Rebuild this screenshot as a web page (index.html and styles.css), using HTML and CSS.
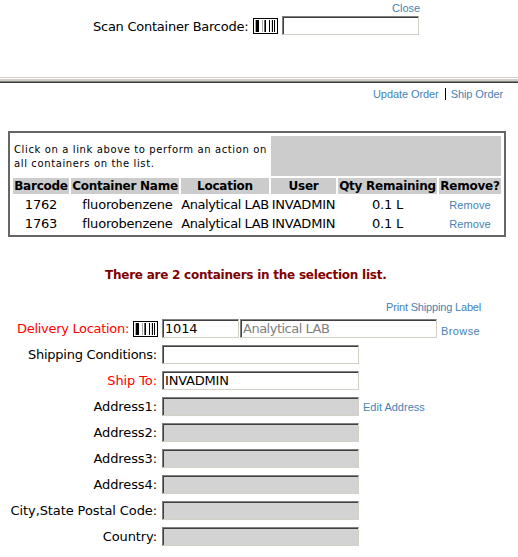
FILE: index.html
```
<!DOCTYPE html>
<html lang="en">
<head>
<meta charset="utf-8">
<title>Ship Order</title>
<link rel="stylesheet" href="styles.css">
</head>
<body>
<svg class="defs" width="0" height="0" aria-hidden="true">
  <symbol id="barcode" viewBox="0 0 25 16">
    <rect width="25" height="16" fill="#000"/>
    <rect x="1" y="1" width="23" height="14" fill="#fff"/>
    <path d="M3 2h1v12H3zM4 2h2v12H4zM12 2h1v12h-1zM16 2h1v12h-1zM19 2h1v12h-1zM21 2h1v12h-1z" fill="#000"/>
    <path d="M2 2h1v12H2zM9 2h1v12H9z" fill="#aaa"/>
    <path d="M11 2h1v12h-1z" fill="#666"/>
    <path d="M18 2h1v12h-1z" fill="#ddd"/>
  </symbol>
</svg>
<header class="scan">
  <a class="link close">Close</a>
  <div class="scan-row">
    <span class="scan-label">Scan Container Barcode:</span>
    <svg class="icon" width="25" height="16"><use href="#barcode"/></svg>
    <span class="field scan-field"></span>
  </div>
</header>
<div class="divider"></div>
<main>
  <nav class="actions"><a class="link">Update Order</a><i></i><a class="link">Ship Order</a></nav>
  <section class="grid">
    <div class="hint">Click on a link above to perform an action on<br>all containers on the list.</div>
    <div class="blank"></div>
    <b>Barcode</b><b>Container Name</b><b>Location</b><b>User</b><b>Qty Remaining</b><b>Remove?</b>
    <span>1762</span><span class="name">fluorobenzene</span><span class="loc">Analytical LAB</span><span>INVADMIN</span><span>0.1 L</span><a class="link">Remove</a>
    <span>1763</span><span class="name">fluorobenzene</span><span class="loc">Analytical LAB</span><span>INVADMIN</span><span>0.1 L</span><a class="link">Remove</a>
  </section>
  <p class="notice">There are 2 containers in the selection list.</p>
  <a class="link print">Print Shipping Label</a>
  <form class="form">
    <div class="row"><label class="req"><span class="delivery">Delivery Location:</span><svg class="icon" width="25" height="16"><use href="#barcode"/></svg></label><span class="field id">1014</span><span class="field place">Analytical LAB</span><a class="link browse">Browse</a></div>
    <div class="row"><label><span class="conditions">Shipping Conditions:</span></label><span class="field"></span></div>
    <div class="row"><label class="req"><span>Ship To:</span></label><span class="field">INVADMIN</span></div>
    <div class="row"><label><span>Address1:</span></label><span class="field off"></span><a class="link edit">Edit Address</a></div>
    <div class="row"><label><span>Address2:</span></label><span class="field off"></span></div>
    <div class="row"><label><span>Address3:</span></label><span class="field off"></span></div>
    <div class="row"><label><span>Address4:</span></label><span class="field off"></span></div>
    <div class="row"><label><span class="city">City,State Postal Code:</span></label><span class="field off"></span></div>
    <div class="row"><label><span>Country:</span></label><span class="field off"></span></div>
  </form>
</main>
</body>
</html>
```
FILE: styles.css
```
* { box-sizing: border-box; }
body { margin: 0; width: 518px; height: 557px; overflow: hidden; background: #fff; color: #000; font: 13px/16px "DejaVu Sans", sans-serif; letter-spacing: -0.2px; white-space: nowrap; }
.defs { position: absolute; }
.link { color: #4682b4; font: 11px/14px "Liberation Sans", sans-serif; letter-spacing: 0; }
.icon { display: block; flex: none; }
.scan { height: 77px; padding-top: 1px; }
.close { display: block; margin-left: 392px; height: 14px; }
.scan-row { display: flex; margin: 1px 0 0 93px; align-items: flex-start; }
.scan-label { width: 160px; padding-top: 3px; letter-spacing: -0.25px; }
.scan-row .icon { margin-top: 2px; }
.field { display: block; flex: none; width: 197px; height: 19px; padding: 1px 0 0 2px; line-height: 16px; border: 1px solid; border-color: #808080 #d4d0c8 #d4d0c8 #808080; box-shadow: inset 1px 1px #404040; background: #fff; }
.field.off { background: #d3d3d3; }
.scan-field { width: 137px; margin-left: 4px; }
.divider { height: 6px; border-top: 1px solid #d4d0c8; background: linear-gradient(#fff 0 1px, #d4d0c8 1px 3px, #808080 3px 4px, #404040 4px 5px); }
.actions { display: flex; padding-left: 373px; height: 48px; padding-top: 4px; }
.actions .link { letter-spacing: -0.08px; }
.actions i { width: 1px; height: 12px; margin: 1px 5px 0 6px; background: #000; }
.grid { display: grid; width: 498px; height: 106px; margin-left: 8px; padding: 3px; border: 2px solid #666; grid-template-columns: 56px 108px 88px 65px 99px 62px; grid-template-rows: 40px 16px 17px 17px; gap: 2px; text-align: center; }
.grid > * { line-height: 17px; }
.grid b { background: #ccc; font-size: 12px; line-height: 17px; letter-spacing: -0.24px; }
.grid .hint { grid-column: span 3; text-align: left; font-size: 10px; line-height: 14px; padding: 7px 0 0 1px; letter-spacing: 0.62px; }
.blank { grid-column: span 3; background: #ccc; }
.name { padding-left: 5px; }
.loc { letter-spacing: -0.42px; }
.grid .link { line-height: 18px; letter-spacing: 0.1px; }
.notice { margin: 30px 0 0 105px; color: #800000; font-size: 12px; font-weight: bold; height: 16px; line-height: 17px; letter-spacing: -0.24px; }
.print { display: block; margin: 17px 0 0 386px; letter-spacing: -0.17px; }
.form { display: grid; grid-auto-rows: 19px; gap: 7px; margin-top: 5px; }
.row { display: flex; }
.row label { display: flex; justify-content: flex-end; width: 162px; padding: 2px 5px 0 0; letter-spacing: -0.1px; }
.row label .icon { margin: 0 -1px 0 4px; }
.row label .delivery { letter-spacing: -0.31px; }
.row label .conditions { letter-spacing: -0.25px; }
.row label .city { letter-spacing: -0.1px; }
.req { color: #f00; }
.row .id { width: 77px; margin-right: 1px; }
.place { color: #808080; letter-spacing: -0.5px; }
.browse { margin: 5px 0 0 4px; letter-spacing: 0.4px; }
.edit { margin: 3px 0 0 4px; }
```
